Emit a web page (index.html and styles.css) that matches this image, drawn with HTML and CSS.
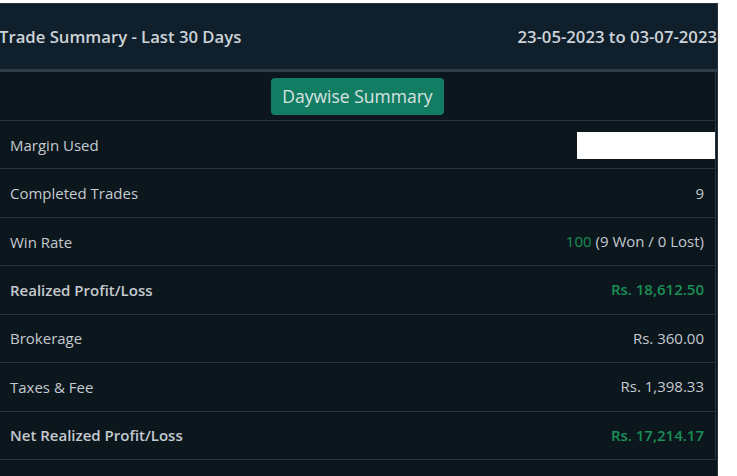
FILE: index.html
```html
<!DOCTYPE html>
<html>
<head>
<meta charset="utf-8">
<link rel="stylesheet" href="styles.css">
</head>
<body>
<div class="card">
  <div class="card-header">
    <span class="title">Trade Summary - Last 30 Days</span>
    <span class="range">23-05-2023 to 03-07-2023</span>
  </div>
  <div class="card-body">
    <div class="table">
      <div class="btn-row"><button class="btn">Daywise Summary</button></div>
      <div class="row"><span class="label">Margin Used</span><span class="value"><span class="redact"></span></span></div>
      <div class="row"><span class="label">Completed Trades</span><span class="value">9</span></div>
      <div class="row"><span class="label">Win Rate</span><span class="value"><span class="green">100</span> (9 Won / 0 Lost)</span></div>
      <div class="row strong"><span class="label">Realized Profit/Loss</span><span class="value green">Rs. 18,612.50</span></div>
      <div class="row"><span class="label">Brokerage</span><span class="value">Rs. 360.00</span></div>
      <div class="row"><span class="label">Taxes &amp; Fee</span><span class="value">Rs. 1,398.33</span></div>
      <div class="row strong"><span class="label">Net Realized Profit/Loss</span><span class="value green">Rs. 17,214.17</span></div>
    </div>
  </div>
</div>
</body>
</html>
```

FILE: styles.css
```css
html, body {
  margin: 0;
  padding: 0;
  background: #ffffff;
  height: 476px;
  overflow: hidden;
}
body {
  padding-top: 3px;
  box-sizing: border-box;
  font-family: "Open Sans", "Liberation Sans", sans-serif;
}
.card {
  width: 719px;
  margin-left: -1px;
  box-sizing: border-box;
  background: #0c161d;
  border: 1px solid #27343e;
  border-bottom: none;
  height: 473px;
  overflow: hidden;
}
.card-header {
  display: flex;
  justify-content: space-between;
  align-items: center;
  height: 65px;
  background: #0f202c;
  border-bottom: 3px solid #2e3d48;
  color: #cdd3d8;
  font-size: 16.7px;
  font-weight: 600;
}
.title { margin-left: -1px; }
.card-body {
  padding-right: 1px;
}
.table {
  border-right: 1px solid #27343e;
}
.btn-row {
  height: 48px;
  display: flex;
  align-items: center;
  justify-content: center;
  border-bottom: 1px solid #27343e;
}
.btn {
  font-family: inherit;
  background: #137d63;
  color: #d9e4e2;
  border: none;
  border-radius: 4px;
  height: 37px;
  padding: 0 11px;
  font-size: 17.5px;
  margin-left: 0;
}
.row {
  display: flex;
  justify-content: space-between;
  align-items: center;
  height: 48.43px;
  box-sizing: border-box;
  border-bottom: 1px solid #27343e;
  padding: 0 11px 0 10px;
  font-size: 15px;
  color: #c4cad0;
}
.row.strong { font-weight: 600; }
.green { color: #188f55; }
.value { display: block; line-height: 27px; }
.redact {
  display: inline-block;
  vertical-align: middle;
  width: 138px;
  height: 27px;
  background: #ffffff;
  margin-right: -11px;
}
```
